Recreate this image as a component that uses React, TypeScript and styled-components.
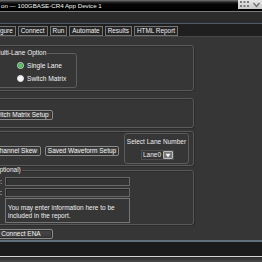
import React from "react";
import styled, { createGlobalStyle } from "styled-components";

const Global = createGlobalStyle`
  html, body { margin: 0; padding: 0; background: #363636; overflow: hidden; }
  body { font-family: "Liberation Sans", Arial, sans-serif; }
  * { box-sizing: border-box; }
`;

const Window = styled.div`
  width: 262px;
  height: 262px;
  display: flex;
  flex-direction: column;
  overflow: hidden;
  background: #363636;
  color: #ececec;
  font-size: 6.5px;
  line-height: 8px;
`;

const TitleBar = styled.div`
  height: 11px;
  flex: none;
  display: flex;
  align-items: flex-start;
  justify-content: space-between;
  background: linear-gradient(#7a7a7a 0px, #2a2a2a 2px, #060606 4px, #000 100%);
`;

const TitleText = styled.span`
  font-size: 6.2px;
  line-height: 11px;
  color: #f2f2f2;
  padding-left: 1px;
  white-space: nowrap;
`;

const WinControls = styled.div`
  width: 24px;
  height: 9px;
  background: linear-gradient(#e6e6e6, #c8c8c8);
  display: flex;
  align-items: center;
  justify-content: space-around;
`;

const MenuBar = styled.div`
  height: 13px;
  flex: none;
  background: #2c2c2c;
  border-top: 1px solid #7a7a7a;
  border-bottom: 1px solid #4e5b67;
`;

const TabStrip = styled.div`
  height: 13px;
  flex: none;
  background: #1f1f1f;
  border-bottom: 1px solid #474747;
  padding-top: 2px;
  display: flex;
  gap: 2px;
  white-space: nowrap;
`;

const Tab = styled.div<{ $shift?: number }>`
  height: 10px;
  flex: none;
  padding: 0 2px;
  margin-left: ${(p) => p.$shift ?? 0}px;
  border: 1px solid #747474;
  background: #262626;
  color: #f0f0f0;
  font-size: 6.4px;
  line-height: 8px;
`;

const Content = styled.div`
  flex: 1;
  min-height: 0;
  background: #363636;
  padding-top: 8px;
`;

const Column = styled.div`
  width: 244px;
  margin-left: -50px;
  display: flex;
  flex-direction: column;
`;

const Panel = styled.div<{ $h: number; $mt: number; $pt: number; $row?: boolean }>`
  height: ${(p) => p.$h}px;
  margin-top: ${(p) => p.$mt}px;
  padding-top: ${(p) => p.$pt}px;
  border: 1px solid #595959;
  border-radius: 3px;
  box-shadow: inset 1px 1px 0 #2c2c2c, 1px 1px 0 #2c2c2c;
  display: flex;
  flex-direction: ${(p) => (p.$row ? "row" : "column")};
  align-items: flex-start;
`;

const Group = styled.fieldset<{ $ml: number; $w: number; $h: number }>`
  margin: 0 0 0 ${(p) => p.$ml}px;
  padding: 0;
  width: ${(p) => p.$w}px;
  height: ${(p) => p.$h}px;
  border: 1px solid #5e5e5e;
  border-radius: 3px;
  min-width: 0;
`;

const Legend = styled.legend<{ $ml: number }>`
  margin-left: ${(p) => p.$ml}px;
  padding: 0 1px;
  font-size: 6.5px;
  line-height: 8px;
  color: #f0f0f0;
  white-space: nowrap;
`;

const RadioList = styled.div`
  padding: 3px 0 0 28px;
  display: flex;
  flex-direction: column;
  gap: 2px;
`;

const RadioRow = styled.label`
  height: 11px;
  display: flex;
  align-items: center;
  gap: 3px;
  font-size: 6.6px;
  color: #f2f2f2;
`;

const RadioDot = styled.span<{ $on?: boolean }>`
  width: 7px;
  height: 7px;
  border-radius: 50%;
  flex: none;
  border: 1px solid ${(p) => (p.$on ? "#cfe8d2" : "#e8e8e8")};
  background: ${(p) =>
    p.$on
      ? "radial-gradient(circle at 50% 50%, #58c868 0 1.6px, #1d7a30 2.4px)"
      : "#f6f6f6"};
`;

const Button = styled.button<{ $w: number; $ml: number; $mt?: number }>`
  width: ${(p) => p.$w}px;
  height: 10px;
  flex: none;
  margin: ${(p) => p.$mt ?? 0}px 0 0 ${(p) => p.$ml}px;
  padding: 0;
  border: 1px solid #8c8c8c;
  border-radius: 2px;
  background: linear-gradient(#474747, #3a3a3a);
  box-shadow: inset 0 0 0 1px #2e2e2e;
  color: #f2f2f2;
  font-family: "Liberation Sans", Arial, sans-serif;
  font-size: 6.5px;
  line-height: 8px;
  white-space: nowrap;
  display: flex;
  align-items: center;
  justify-content: center;
`;

const LaneBox = styled.div`
  width: 65px;
  height: 31px;
  margin: 1px 0 0 5px;
  border: 1px solid #5c5c5c;
  border-radius: 3px;
  display: flex;
  flex-direction: column;
  align-items: center;
  padding-top: 4px;
`;

const LaneLabel = styled.div`
  font-size: 6.5px;
  line-height: 8px;
  white-space: nowrap;
`;

const Select = styled.div`
  margin-top: 4px;
  margin-left: 2px;
  height: 10px;
  width: 33px;
  border: 1px solid #4e4e4e;
  display: flex;
  align-items: center;
  justify-content: space-between;
  padding-left: 1px;
  font-size: 6.5px;
`;

const DropButton = styled.span`
  width: 10px;
  height: 8px;
  border: 1px solid #bdbdbd;
  border-radius: 1px;
  background: #767676;
  display: flex;
  align-items: center;
  justify-content: center;
`;

const InfoGroup = styled.fieldset`
  margin: 0;
  padding: 0 0 1px 0;
  height: 59px;
  border: 1px solid #595959;
  border-radius: 3px;
  min-width: 0;
  box-shadow: inset 1px 1px 0 #2c2c2c, 1px 1px 0 #2c2c2c;
`;

const FieldRow = styled.div<{ $mt: number }>`
  display: flex;
  align-items: center;
  margin-top: ${(p) => p.$mt}px;
  height: 9px;
`;

const FieldLabel = styled.span`
  width: 52px;
  text-align: right;
  white-space: nowrap;
  overflow: hidden;
  font-size: 6.5px;
  padding-right: 1px;
`;

const TextInput = styled.div`
  width: 125px;
  height: 9px;
  margin-left: 2px;
  border: 1px solid #686868;
  background: #343434;
  box-shadow: inset 1px 1px 0 #262626;
`;

const Note = styled.div`
  width: 125px;
  height: 25px;
  margin: 1px 0 0 54px;
  border: 1px solid #757575;
  padding: 5px 0 0 2px;
  font-size: 6.5px;
  line-height: 7.5px;
  color: #f0f0f0;
`;

const Footer = styled.div`
  flex: none;
  height: 17px;
  background: #1b1b1b;
  border-top: 2px solid #5f6f7c;
  border-bottom: 1px solid #d4d4d4;
`;

const BottomEdge = styled.div`
  flex: none;
  height: 5px;
  background: linear-gradient(#2a2a2a, #4a4a4a);
`;

export default function App() {
  return (
    <>
      <Global />
      <Window>
        <TitleBar>
          <TitleText>on — 100GBASE-CR4 App Device 1</TitleText>
          <WinControls>
            <svg width="9" height="7" viewBox="0 0 9 7">
              <g fill="#7a7a7a">
                <rect x="0" y="0" width="2" height="2" />
                <rect x="3.5" y="0" width="2" height="2" />
                <rect x="0" y="4" width="2" height="2" />
                <rect x="3.5" y="4" width="2" height="2" />
                <rect x="7" y="0" width="2" height="2" />
                <rect x="7" y="4" width="2" height="2" />
              </g>
            </svg>
            <svg width="7" height="6" viewBox="0 0 7 6">
              <path d="M0.5 1 L3.5 4.5 L6.5 1" stroke="#6a6a6a" strokeWidth="1.2" fill="none" />
            </svg>
          </WinControls>
        </TitleBar>
        <MenuBar />
        <TabStrip>
          <Tab $shift={-18}>Configure</Tab>
          <Tab>Connect</Tab>
          <Tab>Run</Tab>
          <Tab>Automate</Tab>
          <Tab>Results</Tab>
          <Tab>HTML Report</Tab>
        </TabStrip>
        <Content>
          <Column>
            <Panel $h={46} $mt={0} $pt={3}>
              <Group $ml={37} $w={89} $h={39}>
                <Legend $ml={5}>Multi-Lane Option</Legend>
                <RadioList>
                  <RadioRow>
                    <RadioDot $on />
                    Single Lane
                  </RadioRow>
                  <RadioRow>
                    <RadioDot />
                    Switch Matrix
                  </RadioRow>
                </RadioList>
              </Group>
            </Panel>
            <Panel $h={30} $mt={7} $pt={11}>
              <Button $w={66} $ml={36}>Switch Matrix Setup</Button>
            </Panel>
            <Panel $h={35} $mt={3} $pt={0} $row>
              <Button $w={50} $ml={40} $mt={14}>Channel Skew</Button>
              <Button $w={74} $ml={4} $mt={14}>Saved Waveform Setup</Button>
              <LaneBox>
                <LaneLabel>Select Lane Number</LaneLabel>
                <Select>
                  <span>Lane0</span>
                  <DropButton>
                    <svg width="6" height="5" viewBox="0 0 6 5">
                      <path d="M0.5 0.8 H5.5 L3 4.4 Z" fill="#f4f4f4" />
                    </svg>
                  </DropButton>
                </Select>
              </LaneBox>
            </Panel>
            <InfoGroup>
              <Legend $ml={7}>Comments (Optional)</Legend>
              <FieldRow $mt={3}>
                <FieldLabel>Device ID:</FieldLabel>
                <TextInput />
              </FieldRow>
              <FieldRow $mt={2}>
                <FieldLabel>User Comment:</FieldLabel>
                <TextInput />
              </FieldRow>
              <Note>You may enter information here to be included in the report.</Note>
            </InfoGroup>
            <Button $w={64} $ml={39} $mt={4}>Connect ENA</Button>
          </Column>
        </Content>
        <Footer />
        <BottomEdge />
      </Window>
    </>
  );
}
